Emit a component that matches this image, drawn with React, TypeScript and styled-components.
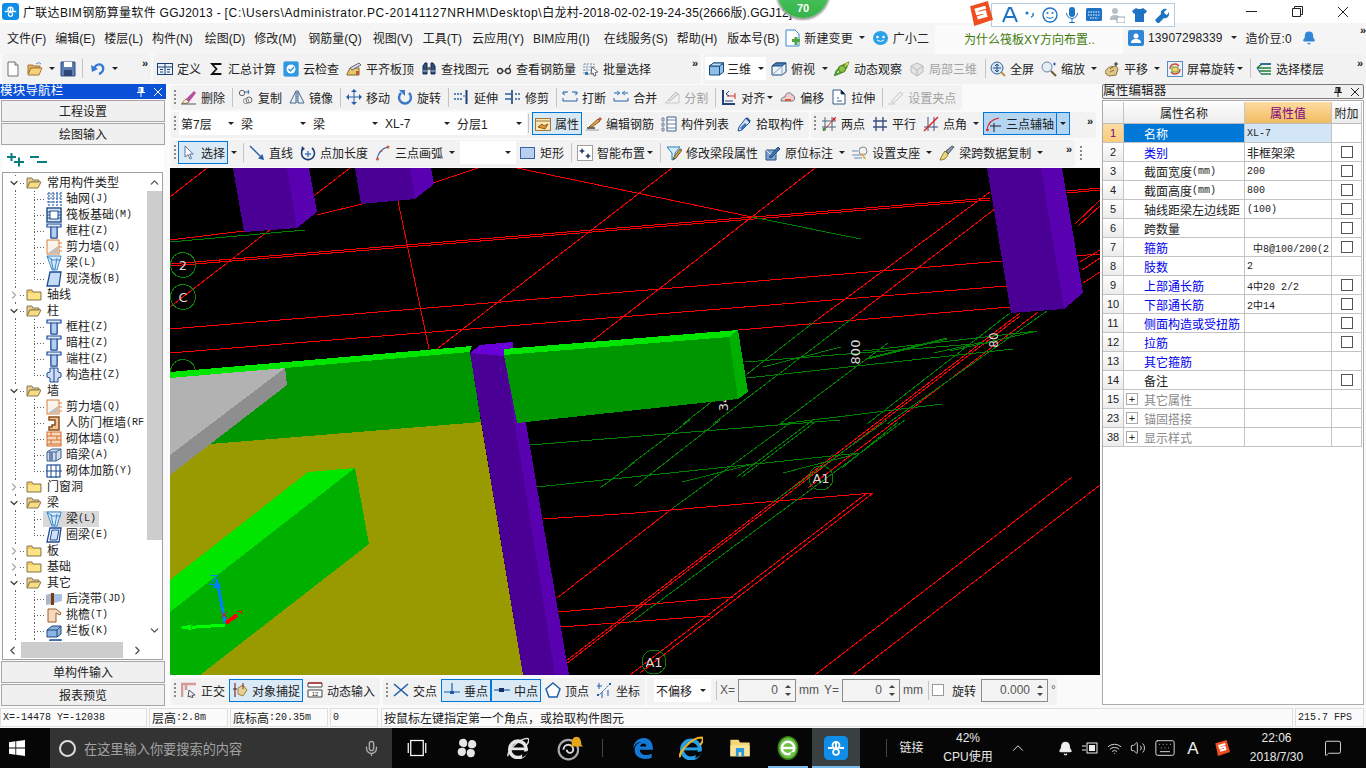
import React from 'react';
import styled, { createGlobalStyle } from 'styled-components';
import { Mic, Bell, Wifi, Volume2, Keyboard, ChevronUp, MessageSquare, ChevronRight, ChevronDown, ChevronLeft } from 'lucide-react';

const SANS = `"Liberation Sans","Noto Sans CJK SC",sans-serif`;
const MONO = `"Liberation Mono","Noto Sans CJK SC",monospace`;

const Global = createGlobalStyle`
  html, body { margin: 0; padding: 0; background: #fafafa; }
  body { font-family: ${SANS}; font-size: 12px; color: #222; }
  * { box-sizing: border-box; }
`;

const Page = styled.div`
  width: 1366px; height: 768px; overflow: hidden; position: relative;
  display: flex; flex-direction: column; background: #fafafa;
`;

/* ---------- title ---------- */
const TitleBar = styled.div`
  height: 23px; background: #fff; display: flex; align-items: center; padding-left: 2px; flex: none;
`;
const TitleText = styled.div`
  margin-left: 4px; font-size: 12px; color: #111; white-space: nowrap; letter-spacing: 0.14px;
`;
const TitleSpan = styled.span<{ $ls: number }>`letter-spacing: ${p => p.$ls}px;`;
const WinBtns = styled.div`margin-left: auto; display: flex;`;
const WinBtn = styled.div`width: 46px; height: 23px; display: flex; align-items: center; justify-content: center; color: #222;`;
const Badge = styled.div`
  position: absolute; left: 777px; top: -34px; width: 52px; height: 52px; border-radius: 50%;
  background: linear-gradient(#5fd06f, #35b34a); box-shadow: 0 1px 2px 1px #9a9a9a;
  display: flex; align-items: flex-end; justify-content: center; padding-bottom: 4px;
  color: #fff; font-weight: bold; font-size: 11px;
`;
const Sogou = styled.div`
  position: absolute; left: 991px; top: 3px; width: 184px; height: 24px; background: #fff;
  border: 1px solid #b5cde0; display: flex; align-items: center; padding-left: 10px; gap: 7px;
`;
const SogouLogo = styled.div`
  position: absolute; left: 968px; top: 1px; width: 25px; height: 25px;
`;

/* ---------- menu ---------- */
const MenuBar = styled.div`
  height: 31px; background: #f5f5f5; flex: none; display: flex; align-items: center; padding: 0 0 2px 7px; gap: 9px; white-space: nowrap;
`;
const MenuItem = styled.span<{ $ml?: number }>`margin-left: ${p => p.$ml ?? 0}px; display: inline-flex; align-items: center; gap: 3px;`;
const MenuText = styled.span<{ $ml?: number }>`margin-left: ${p => p.$ml ?? 1}px; letter-spacing: 0.1px;`;
const HintTab = styled.div`
  width: 188px; height: 29px; margin: 0 -4px -2px -3px; align-self: flex-end; background: #fbfbfb; border-radius: 4px 4px 0 0; padding-bottom: 2px;
  color: #3d7a0a; padding-left: 29px; display: flex; align-items: center;
`;
const CornerMore = styled.span`
  margin-left: auto; font-size: 11px; font-weight: bold; color: #222; line-height: 8px; align-self: flex-start; margin-top: 3px; margin-right: 0;
`;

/* ---------- toolbars ---------- */
const Row = styled.div<{ $h: number; $mt?: number }>`
  height: ${p => p.$h}px; margin-top: ${p => p.$mt ?? 0}px; display: flex; gap: 2px; flex: none;
`;
const Toolbar = styled.div<{ $w?: number; $ml?: number; $gap?: number; $pl?: number; $bg?: string; $pb?: number }>`
  ${p => (p.$w ? `width:${p.$w}px;` : '')}
  margin-left: ${p => p.$ml ?? 0}px;
  height: 100%; background: ${p => p.$bg ?? '#f2f2f2'}; border-radius: 3px; display: flex; align-items: center;
  gap: ${p => p.$gap ?? 7}px; padding: 0 3px ${p => p.$pb ?? 1}px ${p => p.$pl ?? 3}px; white-space: nowrap; flex: none;
`;
const Grip = styled.div`
  width: 2px; height: 15px; margin-right: -2px; flex: none;
  background: repeating-linear-gradient(to bottom, #8a8a8a 0 2px, transparent 2px 4px);
`;
const Tool = styled.div<{ $ml?: number; $off?: boolean }>`
  display: inline-flex; align-items: center; gap: 4px; flex: none;
  margin-left: ${p => p.$ml ?? 0}px;
  color: ${p => (p.$off ? '#a2a2a2' : '#222')};
`;
const ActiveTool = styled.div<{ $hi?: boolean; $ml?: number; $mr?: number }>`
  display: inline-flex; align-items: center; gap: 4px; flex: none; height: 23px;
  padding: 0 2px; margin: 0 ${p => p.$mr ?? -3}px 0 ${p => p.$ml ?? -3}px;
  border: 1px solid #0078d7; background: ${p => (p.$hi ? '#b4d6f2' : '#d9e9f6')}; color: #222;
`;
const SplitBtn = styled.div`
  width: 13px; height: 23px; margin-left: -7px; border: 1px solid #0078d7; border-left: none; background: #b4d6f2;
  display: flex; align-items: center; justify-content: center; flex: none;
`;
const Caret = styled.i<{ $ml?: number }>`
  display: inline-block; flex: none; width: 0; height: 0; margin-left: ${p => p.$ml ?? 0}px;
  border-left: 3px solid transparent; border-right: 3px solid transparent; border-top: 3px solid #222;
`;
const Sep = styled.div<{ $ml?: number; $mr?: number }>`
  width: 1px; height: 19px; background: #c4c4c4; flex: none; margin-left: ${p => p.$ml ?? 0}px; margin-right: ${p => p.$mr ?? -2}px;
`;
const More = styled.span`
  margin-left: auto; font-size: 11px; font-weight: bold; color: #222; line-height: 8px; align-self: flex-start; margin-top: 5px;
`;
const ComboGroup = styled.div`display: flex; gap: 0; flex: none; margin: 0 -7px 0 -2px;`;
const Combo = styled.div<{ $w?: number; $ml?: number }>`
  width: ${p => p.$w ?? 72}px; height: 23px; margin-left: ${p => p.$ml ?? 0}px; background: #fff; display: flex; align-items: center;
  justify-content: space-between; padding: 0 5px 0 2px; flex: none; font-size: 12px;
`;
const ViewCombo = styled(Combo)`
  gap: 2px; padding: 0 5px 0 3px; justify-content: flex-start;
`;
const Spin = styled.div<{ $w: number; $ml?: number }>`
  width: ${p => p.$w}px; height: 23px; margin-left: ${p => p.$ml ?? 0}px; border: 1px solid #8c8c8c; background: #f4f4f4; color: #555; display: flex;
  align-items: center; justify-content: flex-end; padding-right: 4px; gap: 7px; font-size: 12px; flex: none;
`;
const SpinArrows = styled.div`
  display: flex; flex-direction: column; gap: 5px;
  & > i { width: 0; height: 0; border-left: 3px solid transparent; border-right: 3px solid transparent; }
  & > i:first-child { border-bottom: 3px solid #444; }
  & > i:last-child { border-top: 3px solid #444; }
`;
const Plain = styled.span<{ $c?: string; $ml?: number }>`color: ${p => p.$c ?? '#555'}; margin-left: ${p => p.$ml ?? 0}px; flex: none;`;
const CheckBox = styled.span<{ $c?: string }>`
  display: inline-block; width: 12px; height: 12px; border: 1px solid ${p => p.$c ?? '#999'}; background: #fff; flex: none;
`;

/* ---------- layout ---------- */
const Work = styled.div`height: 621px; display: flex; flex: none;`;
const Left = styled.div`width: 166px; display: flex; flex-direction: column; flex: none;`;
const Center = styled.div`width: 930px; margin-left: 4px; padding-top: 1px; flex: none; display: flex; flex-direction: column;`;
const Right = styled.div`width: 262px; margin-left: 2px; flex: none; display: flex; flex-direction: column;`;

const NavHead = styled.div`
  height: 15px; background: #0b51d8; color: #fff; font-size: 12.5px; display: flex; align-items: center; justify-content: space-between; padding-right: 3px;
  letter-spacing: 0.2px; line-height: 15px;
`;
const HeadIcons = styled.div`display: flex; gap: 7px; align-items: center;`;
const NavBtn = styled.div`
  height: 22px; margin: 1px 1px 0 1px; padding-bottom: 2px; background: #f0f0f0; border: 1px solid #a6a6a6; display: flex; align-items: center; justify-content: center; flex: none;
`;
const TreeTools = styled.div`
  height: 26px; margin: 1px 2px 0 2px; background: #fff; display: flex; align-items: center; padding-left: 5px; gap: 6px; flex: none;
`;
const TreeBox = styled.div`
  height: 488px; margin: 0 3px 0 2px; border: 1px solid #a0a0a0; background: #fff; display: flex; flex-direction: column; flex: none;
`;
const TreeMain = styled.div`flex: 1; min-height: 0; display: flex;`;
const TreeList = styled.div`width: 144px; overflow: hidden; padding-top: 2px; flex: none;`;
const dotV = (x: number) => `repeating-linear-gradient(to bottom,#666 0 1px,transparent 1px 3px) ${x}px 0/1px 100% no-repeat`;
const TreeRow = styled.div<{ $child?: boolean; $half?: boolean }>`
  height: 16px; display: flex; align-items: center; white-space: nowrap; font-size: 12px; color: #222;
  padding-left: ${p => (p.$child ? 43 : 5)}px;
  background: ${p => [
    dotV(12),
    p.$child ? `repeating-linear-gradient(to right,#666 0 1px,transparent 1px 3px) 31px 8px/12px 1px no-repeat` : '',
    p.$child && !p.$half ? dotV(31) : '',
    p.$child && p.$half ? `repeating-linear-gradient(to bottom,#666 0 1px,transparent 1px 3px) 31px 0/1px 8px no-repeat` : '',
  ].filter(Boolean).join(',')};
`;
const TreeChevron = styled.span`
  width: 12px; display: inline-flex; align-items: center; justify-content: center; background: #fff; height: 12px; flex: none;
`;
const TreeItem = styled.span<{ $sel?: boolean }>`
  display: inline-flex; align-items: center; margin-left: -3px; padding: 0 3px; background: ${p => (p.$sel ? '#d9d9d9' : 'transparent')};
`;
const TreeLabel = styled.span<{ $ml?: number }>`
  margin-left: ${p => p.$ml ?? 4}px; line-height: 16px; display: inline-flex; align-items: center;
`;
const FolderGap = styled.span`width: 6px; flex: none; background: repeating-linear-gradient(to right,#666 0 1px,transparent 1px 3px) 0 8px/100% 1px no-repeat; height: 16px;`;
const Suffix = styled.span`font-family: ${MONO}; font-size: 10px; color: inherit;`;
const VScroll = styled.div`
  width: 15px; flex: none; background: #fff; display: flex; flex-direction: column; align-items: center;
`;
const ScrollThumb = styled.div<{ $h: number; $mt: number }>`width: 15px; height: ${p => p.$h}px; margin-top: ${p => p.$mt}px; background: #cdcdcd; flex: none;`;
const HScroll = styled.div`height: 18px; display: flex; align-items: center; flex: none; background: #fff; padding-left: 3px;`;
const HThumb = styled.div`width: 102px; height: 16px; background: #cdcdcd; margin: 0 8px 0 2px;`;

/* ---------- canvas ---------- */
const Canvas = styled.div`width: 930px; height: 507px; background: #000; margin-top: 1px; flex: none; overflow: hidden; line-height: 0;`;

/* ---------- property editor ---------- */
const PropHead = styled.div`
  height: 15px; border: 1px solid #7a7a7a; border-radius: 2px; background: #f0f0f0; display: flex; align-items: center; justify-content: space-between; padding-right: 3px;
  font-size: 12.5px; line-height: 13px; letter-spacing: 0.2px;
`;
const PropBody = styled.div`flex: 1; margin-top: 1px; background: #fff; border: 1px solid #ababab; padding: 1px 0 0 0; display: flex; flex-direction: column;`;
const PropGrid = styled.div`display: grid; grid-template-columns: 21px 121px 87px 30px; grid-template-rows: 22px; grid-auto-rows: 19px; width: 259px;`;
const HCell = styled.div<{ $hot?: boolean }>`
  height: 22px; display: flex; align-items: center; justify-content: center;
  background: ${p => (p.$hot ? 'linear-gradient(#fddca0,#f0bc62)' : 'linear-gradient(#fdfdfd,#ececec)')};
  color: ${p => (p.$hot ? '#800080' : '#222')}; border-right: 1px solid #c4c4c4; border-bottom: 1px solid #bcbcbc;
`;
const Num = styled.div<{ $hot?: boolean }>`
  background: ${p => (p.$hot ? 'linear-gradient(#fcdc9f,#f8cc7d)' : 'linear-gradient(#fff,#ececec)')};
  color: ${p => (p.$hot ? '#800080' : '#222')}; border-right: 1px solid #c4c4c4; border-bottom: 1px solid #c4c4c4;
  display: flex; align-items: center; justify-content: center; font-size: 11px;
`;
const Name = styled.div<{ $c?: string; $sel?: boolean }>`
  background: ${p => (p.$sel ? '#0078d7' : '#fff')}; color: ${p => (p.$sel ? '#fff' : p.$c ?? '#222')};
  border-right: 1px solid #c4c4c4; border-bottom: 1px solid #c4c4c4; padding-left: 20px; display: flex; align-items: center; white-space: nowrap; overflow: hidden;
  position: relative;
`;
const Expander = styled.span`
  position: absolute; left: 2px; top: 3px; width: 12px; height: 12px; border: 1px solid #aaa; color: #222; display: flex; align-items: center; justify-content: center; font-size: 11px; line-height: 10px;
`;
const Val = styled.div<{ $mono?: boolean; $sel?: boolean }>`
  background: ${p => (p.$sel ? '#d3e6f7' : '#fff')}; border-right: 1px solid #c4c4c4; border-bottom: 1px solid #c4c4c4; padding-left: 2px;
  display: flex; align-items: center; white-space: pre; overflow: hidden;
  font-family: ${p => (p.$mono ? MONO : SANS)}; font-size: ${p => (p.$mono ? 10 : 12)}px;
`;
const Add = styled.div`
  border-right: 1px solid #c4c4c4; border-bottom: 1px solid #c4c4c4; display: flex; align-items: center; justify-content: center; background: #fff;
`;

/* ---------- status ---------- */
const Status = styled.div`height: 20px; margin-top: 3px; display: flex; gap: 2px; flex: none; background: #fafafa;`;
const StatusCell = styled.div<{ $w: number; $ml?: number }>`
  width: ${p => p.$w}px; margin-left: ${p => p.$ml ?? 0}px; height: 19px; background: #fbfbfb; border: 1px solid #dedede; display: flex; align-items: center; padding-left: 2px;
  font-family: ${MONO}; font-size: 10px; color: #222; white-space: nowrap; flex: none;
`;
const Cjk = styled.span`font-family: ${SANS}; font-size: 12px;`;

/* ---------- taskbar ---------- */
const Taskbar = styled.div`flex: 1; background: #060606; display: flex; align-items: stretch; color: #fff;`;
const StartCell = styled.div`width: 50px; display: flex; align-items: center; justify-content: center; padding-right: 16px; flex: none;`;
const Search = styled.div`
  width: 342px; background: #333; display: flex; align-items: center; padding-left: 9px; gap: 8px; color: #a4a4a4; font-size: 13.2px; flex: none;
`;
const MicWrap = styled.span`margin-left: auto; margin-right: 12px; display: flex; color: #aaa;`;
const Cortana = styled.span`width: 17px; height: 17px; border: 2px solid #ddd; border-radius: 50%; flex: none;`;
const TaskCell = styled.div<{ $w?: number; $on?: boolean; $line?: boolean }>`
  width: ${p => p.$w ?? 49}px; display: flex; align-items: center; justify-content: center; flex: none;
  background: ${p => (p.$on ? '#3a3f42' : 'transparent')};
  box-shadow: ${p => (p.$on ? 'inset 0 -2px 0 #76b9ed' : p.$line ? 'inset 4px 0 0 #060606, inset -4px 0 0 #060606, inset 0 -2px 0 #76b9ed' : 'none')};
`;
const TaskSep = styled.div<{ $ml: number; $mr?: number }>`
  width: 1px; height: 18px; align-self: center; background: #444; margin-left: ${p => p.$ml}px; margin-right: ${p => p.$mr ?? 0}px; flex: none;
`;
const TrayCell = styled.div<{ $w: number; $ml?: number }>`
  width: ${p => p.$w}px; margin-left: ${p => p.$ml ?? 0}px; display: flex; flex-direction: column; align-items: center; justify-content: center;
  font-size: 12px; line-height: 19px; color: #e8e8e8; flex: none; white-space: nowrap;
`;
const BigA = styled.span`font-size: 17px; color: #eee;`;

/* ---------- icons ---------- */
const Svg = styled.svg`flex: none; display: block;`;
const blue = '#2a5fa8', dk = '#1c3f73';
const ICONS: Record<string, React.ReactNode> = {
  new: <><path d="M3 1h7l3 3v11H3z" fill="#fff" stroke="#6f6f6f" /><path d="M10 1v3h3" fill="#ddd" stroke="#6f6f6f" /></>,
  open: <><path d="M1 13V4h5l1 1h6v2H4z" fill="#e3b35b" stroke="#a5793a" /><path d="M1 14l3-7h11l-3 7z" fill="#f5d27a" stroke="#a5793a" /><path d="M9 3q3-3 5 0" fill="none" stroke="#5a88bb" /></>,
  save: <><path d="M1 1h14v14H1z" fill="#5c7cb4" stroke="#334f80" /><path d="M4 1h8v5H4z" fill="#fff" /><path d="M4 9h8v6H4z" fill="#2d4777" /></>,
  undo: <><path d="M5 9C3 4 11 1 13 6c1 3-1 6-4 7" fill="none" stroke="#3478cf" strokeWidth="2.4" /><path d="M1 4l1 7 6-3z" fill="#3478cf" /></>,
  define: <><rect x="0.5" y="2.5" width="15" height="11" fill="#e9f1f9" stroke={dk} /><path d="M1 6h14M8 3v10M3 8.5h3M3 11h3M10 8.5h3M10 11h3" stroke={dk} /></>,
  sigma: <path d="M12.5 4V3H4l4.5 5L4 13h8.5v-1" fill="none" stroke="#111" strokeWidth="1.8" />,
  cloud: <><rect x="0.5" y="0.5" width="15" height="15" rx="2" fill="#2d97e0" stroke="#77b9e9" /><circle cx="8" cy="8" r="4.5" fill="#fff" /><path d="M5.5 8l2 2 3.5-4" fill="none" stroke="#2d97e0" strokeWidth="1.5" /></>,
  flat: <><path d="M1 13l3-6h9v7H1z" fill="#e9c66b" stroke="#7d6a2e" /><path d="M4 7l9-5 2 2-9 5z" fill="#d8dde4" stroke="#667" /><path d="M10 10h3v4h-3z" fill="#c05a2c" /></>,
  binoc: <><path d="M2 13V5l2-3h2v11zM14 13V5l-2-3h-2v11z" fill="#2f4d7a" stroke="#152a4e" /><path d="M6 6h4v3H6z" fill="#666" /><path d="M2 10h4M10 10h4" stroke="#b8c8e0" /></>,
  glasses: <><circle cx="4" cy="10" r="2.5" fill="none" stroke="#333" strokeWidth="1.3" /><circle cx="12" cy="10" r="2.5" fill="none" stroke="#333" strokeWidth="1.3" /><path d="M6.5 10h3M13 7l1-3h1" fill="none" stroke="#333" /></>,
  batch: <><path d="M1 3h10v10H1z" fill="#fff" stroke="#7d8ca3" strokeDasharray="2 1" /><path d="M1 6h10M1 9h10M4 3v10M8 3v10" stroke="#9fb0c6" /><path d="M2 11h3v3H2z" fill="#3a6fb3" /><path d="M9 6l6 5-3 .5 1 3-2 .5-1-3-2 1z" fill="#fff" stroke="#666" /></>,
  cube: <><path d="M1 5l4-3h10v9l-4 3H1z" fill="#8fc0e8" stroke="#174a7c" /><path d="M1 5h10v9M11 5l4-3" fill="none" stroke="#174a7c" /><path d="M1 5l4-3h10l-4 3z" fill="#c4e0f5" stroke="#174a7c" /></>,
  top: <><path d="M1 5l4-3h10v9l-4 3H1z" fill="#eef3f8" stroke="#174a7c" /><path d="M1 5l4-3h10l-4 3z" fill="#4a7fb5" stroke="#174a7c" /><path d="M11 5v9M1 14l10-9" fill="none" stroke="#7da2c4" /></>,
  orbit: <><path d="M1 14q2-8 13-12-2 9-13 12z" fill="none" stroke="#4f9a34" strokeWidth="2" /><circle cx="8" cy="8" r="3.5" fill="#8cc43d" stroke="#467a1b" /><circle cx="13" cy="3" r="1.6" fill="#f0c840" /></>,
  local: <><path d="M2 5l6-3 6 3v6l-6 4-6-4z" fill="#e4e4e4" stroke="#b8b8b8" /><path d="M2 5l6 4 6-4M8 9v6" fill="none" stroke="#b8b8b8" /></>,
  full: <><circle cx="7" cy="7" r="6" fill="#d4e5f5" stroke="#37618f" /><path d="M7 3v8M3 7h8" stroke="#23507e" /><path d="M5 5l2-2 2 2M5 9l2 2 2-2" fill="none" stroke="#23507e" /><path d="M11 11l4 4" stroke="#c2923f" strokeWidth="2" /></>,
  zoom: <><circle cx="6" cy="6" r="5" fill="#e4ecf4" stroke="#6d87a3" /><path d="M10 10l5 5" stroke="#6a5a30" strokeWidth="2" /><path d="M12 3h3M13.5 1.5v3" stroke="#2a5fa8" /></>,
  pan: <><path d="M2 13c-2-4 2-6 4-7l6-1 2 3-2 6-7 1z" fill="#dfc586" stroke="#8a7440" /><path d="M12 1v4M10 3h4" stroke="#222" /><path d="M6 8l3-2M6 11l4-2" stroke="#8a7440" /></>,
  rot: <><rect x="0.5" y="0.5" width="15" height="15" fill="#eaf3fb" stroke="#5a8dbd" /><path d="M3 8a5 5 0 0 1 9-3M13 8a5 5 0 0 1-9 3" fill="none" stroke="#cf4b36" strokeWidth="1.4" /><path d="M5 6h6v5H5z" fill="#f3d668" stroke="#6f9a3a" /></>,
  floors: <><path d="M1 7l5-4h9M1 7h14M3 10h12M5 13h10" fill="none" stroke="#1f7f3d" strokeWidth="1.5" /><path d="M4 3h11" stroke="#2a5fa8" strokeWidth="1.5" /><path d="M1 7l4 6" stroke="#2a5fa8" /></>,
  del: <><path d="M1 14c2-2 2-3 4-4l3 3c-2 1-4 2-7 1z" fill="#f4f1d6" stroke="#8b7b40" /><path d="M5 10l3 3 7-9-2-2z" fill="#b6529d" /><path d="M0 15h15" stroke="#555" /></>,
  copy: <><circle cx="4" cy="4" r="2.7" fill="none" stroke="#666" /><circle cx="11" cy="11" r="3" fill="none" stroke="#666" /><circle cx="8" cy="12" r="2.7" fill="none" stroke="#999" /><path d="M6 3h5l-1-2M11 3l-1 2" fill="none" stroke="#3469a6" /></>,
  mirror: <><path d="M7 2L1 14h6zM9 2l6 12H9z" fill="#eef2f7" stroke="#44668f" /><path d="M8 1v14" stroke="#44668f" strokeDasharray="1 1" /></>,
  move: <><path d="M8 1v14M1 8h14" stroke="#2a5fa8" /><path d="M8 0l3 3H5zM8 16l3-3H5zM0 8l3-3v6zM16 8l-3-3v6z" fill="#2a5fa8" /></>,
  rotate: <><path d="M4 4a6 6 0 1 0 8 0" fill="none" stroke="#3b79c4" strokeWidth="2.4" /><path d="M2 1h6v6z" fill="#3b79c4" /></>,
  extend: <><path d="M0 5h9M0 10h9" stroke={blue} strokeDasharray="2 1" strokeWidth="1.4" /><path d="M12.5 1v14" stroke={dk} strokeWidth="2" /><path d="M9 7h2" stroke={blue} /></>,
  trim: <><path d="M0 5h6M0 10h6" stroke={blue} strokeWidth="1.3" /><path d="M10 5h6M10 10h6" stroke={blue} strokeWidth="1.3" strokeDasharray="2 1" /><path d="M7 1v14" stroke={dk} strokeWidth="1.6" /></>,
  brk: <><path d="M1 5V3h5M15 5V3h-5" fill="none" stroke={blue} /><path d="M1 12h14M1 9v3M15 9v3" fill="none" stroke={blue} /><path d="M3 6l-2-1 3-2M13 6l2-1-3-2" fill="none" stroke="#3a88d0" /></>,
  merge: <><path d="M1 4h5M10 4h5M1 12h14M1 9v3M15 9v3" fill="none" stroke={blue} /><path d="M4 2l3 2-3 2M12 2L9 4l3 2" fill="none" stroke="#3a88d0" /></>,
  split: <><path d="M1 14L15 5M1 14h14V5" fill="none" stroke="#c8c8c8" /><path d="M4 11l8-8 2 2-8 7z" fill="#e6e6e6" stroke="#bbb" /></>,
  align: <><path d="M2 1v14h12" fill="none" stroke="#22427a" strokeWidth="2" /><path d="M6 7h8M14 4v6" stroke="#c9322f" /><path d="M4 12h8" stroke="#22427a" /><path d="M5 5l3-3M5 5l3 2" fill="none" stroke="#22427a" /></>,
  offset: <><path d="M1 12c0-3 2-4 4-4 0-4 6-6 7-2 3 0 4 6 0 6z" fill="#f4cfc7" stroke="#6c7b8c" /><path d="M5 11h6" stroke="#d35c44" strokeWidth="2" /></>,
  stretch: <><path d="M2 1h8l4 4v10H2z" fill="#fff" stroke="#345a84" /><path d="M10 1v4h4M6 9h2M6 12h5" stroke="#345a84" /></>,
  grip: <><path d="M0 15h7" stroke="#c8c8c8" /><path d="M3 13l9-10 3 2-9 9z" fill="#ededed" stroke="#c8c8c8" /></>,
  prop: <><rect x="0.5" y="2.5" width="15" height="12" fill="#fde7b4" stroke="#a1773a" /><path d="M1 5h14" stroke="#a1773a" /><path d="M3 11l4-3 2 2 4-2-3 5z" fill="#e8963a" stroke="#8a5b1e" /></>,
  edit: <><path d="M1 12h8" stroke="#333" strokeWidth="1.4" /><path d="M3 11l9-8 2 2-8 6z" fill="#e8a93f" stroke="#7a5a20" /><path d="M12 3l2-2 2 2-2 2z" fill="#c05844" /><path d="M0 14h13" stroke="#999" /></>,
  list: <><path d="M6 1h9v14H6z" fill="#fff" stroke="#3a5f8f" /><path d="M6 4h9M6 8h9M6 12h9M1 2h2v3H1zM1 7h2v3H1zM1 12h2v3H1z" fill="none" stroke="#6c7f96" /></>,
  pick: <><path d="M10 2l4 4-8 8-4 1 1-4z" fill="#d5e6f7" stroke="#21508a" /><path d="M4 12l5-5 2 2-5 5z" fill="#3a74bb" /><path d="M11 1l4 4-2 1-3-3z" fill="#21508a" /></>,
  two: <><path d="M4 1v14M11 1v14M1 5h14M1 11h14" stroke="#49667f" /><path d="M2 15L15 1" stroke="#d22" /><circle cx="3" cy="13" r="1.5" fill="#2d9a4a" /><circle cx="13" cy="3" r="1.5" fill="#d22" /></>,
  para: <path d="M4 1v14M11 1v14M1 5h14M1 11h14" stroke="#3c4f80" strokeWidth="1.4" />,
  angle: <><path d="M5 1v14M11 1v14M1 11h14" stroke="#3c4f80" /><path d="M1 15L15 1" stroke="#d22" strokeWidth="1.4" /></>,
  arcaxis: <><path d="M1 14Q2 4 13 2" fill="none" stroke="#d22" strokeWidth="1.2" /><path d="M8 7v9M4 10h11" stroke="#223" /><circle cx="1.5" cy="14" r="1.3" fill="#d22" /></>,
  select: <path d="M4 1v11l3-2.4 2 4.4 1.6-.7-2-4.3h3.6z" fill="#fff" stroke="#5d7594" />,
  line: <><path d="M1 1l13 13" stroke="#2a5fa8" strokeWidth="1.4" /><path d="M15 15l-6-1.5 4.5-4.5z" fill="#2a5fa8" /></>,
  ptlen: <><path d="M3 4a6.5 6.5 0 1 0 9-1" fill="none" stroke={dk} strokeWidth="1.6" /><path d="M2 1l3 3-4 2z" fill={dk} /><path d="M8 6v6M5 9h6" stroke="#3a78c5" strokeWidth="1.4" /></>,
  arc: <><path d="M2 14Q4 4 13 2" fill="none" stroke="#2a5fa8" strokeWidth="1.2" /><circle cx="2.5" cy="14" r="1.5" fill="#d25a3c" /><circle cx="13" cy="2" r="1.5" fill="#d25a3c" /><circle cx="6.5" cy="6" r="1" fill="#d25a3c" /></>,
  rect: <rect x="0.5" y="2.5" width="14" height="11" fill="#b8cff0" stroke="#3a62a8" />,
  smart: <><rect x="0.5" y="0.5" width="15" height="15" fill="#fff" stroke="#444" strokeDasharray="1 1" /><path d="M5 3l1 2 2 1-2 1-1 2-1-2-2-1 2-1zM11 8l1 2 2 1-2 1-1 2-1-2-2-1 2-1z" fill="#2a3f6e" /></>,
  seg: <><path d="M1 2h13l-5 6v6l-3 1V8z" fill="#d7ecf9" stroke="#1d80bd" /><path d="M8 12l6-8 2 1-6 8-3 1z" fill="#d5a84f" stroke="#6e5220" /></>,
  inplace: <><path d="M1 5h10v10H1z" fill="#7da3d0" stroke="#2d517f" /><path d="M1 5l4 4h6" stroke="#dbe7f5" fill="none" /><path d="M4 12l9-10 2 2-9 9z" fill="#3f74b3" stroke="#204a7f" /></>,
  support: <><circle cx="11" cy="6" r="4" fill="#f1f1f1" stroke="#8a8a8a" /><path d="M0 6h6M0 10h10M2 13h8" stroke="#6d8db0" /><path d="M9 9l3 5h2l-3-6z" fill="#e0b258" /></>,
  brush: <><path d="M1 15c4 0 7-2 8-6L6 6C4 9 2 12 1 15z" fill="#f0d776" stroke="#8c7a2a" /><path d="M7 6l2 3 6-7-2-1z" fill="#8a9ab2" stroke="#4b5566" /></>,
  ortho: <><path d="M1 15V2h14" fill="none" stroke="#d39b9b" strokeWidth="2.6" /><path d="M5 2v6" stroke="#d39b9b" strokeWidth="2.6" /><path d="M8 8l6 5-3 .5 1 2-1.5.5-1-2L7 15z" fill="#eee" stroke="#556" /></>,
  snap: <><path d="M3 1v14" stroke="#7c2d2d" strokeWidth="1.2" /><path d="M1 7h4" stroke="#444" strokeWidth="1.2" /><path d="M6 6l5-3 4 5-4 6-5-2z" fill="#e7cf92" stroke="#9a8246" /><path d="M11 1v6" stroke="#7c2d2d" /></>,
  dyn: <><path d="M1 1h14v4H1z" fill="#fff" stroke="#444" /><path d="M1 8h14v7H1z" fill="#fff" stroke="#444" /><text x="8" y="14" textAnchor="middle" fontSize="6" fontFamily="Liberation Sans" fill="#222">12</text><path d="M1 1h14" stroke="#b3322f" strokeWidth="1.5" /></>,
  cross: <path d="M1 2l14 12M15 2L1 14" stroke="#1f5fa8" strokeWidth="1.6" />,
  perp: <><path d="M8 1v9M0 10h16" stroke="#1f5fa8" strokeWidth="1.2" /><rect x="6" y="9" width="4" height="3" fill="#1f5fa8" /></>,
  mid: <><path d="M0 8h16" stroke="#1f5fa8" strokeWidth="1.2" /><rect x="5" y="6" width="5" height="4" fill="#152f68" /></>,
  vertex: <path d="M8 1l7 6-3 8H4L1 7z" fill="#fff" stroke="#1f5fa8" strokeWidth="1.5" />,
  coord: <><path d="M2 14L14 2" stroke="#1f5fa8" strokeDasharray="2 1" /><path d="M3 1v6M1 4h5M6 10v6M12 8v6" stroke="#1f5fa8" /><rect x="1" y="12" width="2" height="2" fill="#1f5fa8" /><rect x="13" y="1" width="2" height="2" fill="#1f5fa8" /></>,
  folderO: <><path d="M1 13V3h5l1 2h6v2H4z" fill="#e9c986" stroke="#8b7a55" /><path d="M1 13l3-6h11l-3 6z" fill="#f8dc82" stroke="#8b7a55" /></>,
  folderC: <><path d="M1 13V3h5l1 2h8v8z" fill="#f5cd5c" stroke="#8b7a55" /><path d="M2 6h12v6H2z" fill="#fbe487" /></>,
  grid: <><path d="M1 2h14v12H1z" fill="#fff" stroke="none" /><path d="M3 1v14M7 1v14M11 1v14M15 1v14M1 3h14M1 7h14M1 11h14" stroke="#2f62ab" strokeWidth="1.2" strokeDasharray="2 1" /></>,
  raft: <><rect x="1" y="1" width="14" height="14" fill="#d9e6f5" stroke="#1d4b8d" strokeWidth="1.4" /><rect x="4" y="4" width="8" height="8" fill="#fff" stroke="#1d4b8d" /><path d="M1 5h3M1 8h3M1 11h3M12 5h3M12 8h3M12 11h3" stroke="#1d4b8d" /></>,
  col: <><path d="M1 1h14v3H11v11H5V4H1z" fill="#dbe8f7" stroke="#1c4a97" strokeWidth="1.2" /><path d="M5 4h6v11H5z" fill="#b6ceee" stroke="#1c4a97" /></>,
  wall: <><rect x="1" y="1" width="12" height="14" fill="#fbf4ed" stroke="#d9803d" /><path d="M2 14l10-7v7z" fill="#a9a9a9" opacity=".7" /><path d="M13 4h3M13 8h3M13 12h3" stroke="#d9803d" /></>,
  beam: <><path d="M1 1h14L11 15H6z" fill="#dcebf9" stroke="#3d86c9" /><path d="M5 3l2 11h2l2-11M1 1l5 4h9" fill="none" stroke="#3d86c9" /></>,
  slab: <path d="M4 1h11l-2 14H1z" fill="#c6dbf4" stroke="#1c4a97" strokeWidth="1.3" />,
  cc: <><path d="M4 1h8v4l3 1v4l-3 1v4H4v-4L1 10V6l3-1z" fill="#cddcf0" stroke="#1c4a97" /><path d="M8 1v14" stroke="#1c4a97" /></>,
  door: <path d="M3 2h10v13H3v-3h3v-2h3V5H3z" fill="#f0c49a" stroke="#8a4d1d" strokeWidth="1.5" />,
  brick: <><rect x="1" y="1" width="14" height="14" fill="#f5d9bf" stroke="#d56a2a" /><path d="M1 5h14M1 9h14M1 13h14M5 1v4M11 5v4M5 9v4" stroke="#d56a2a" /></>,
  hidden: <><path d="M1 5l5-3h9v9l-5 3H1z" fill="#cfdcef" stroke="#3a5e8c" /><path d="M1 5h9v9M10 5l5-3" fill="none" stroke="#3a5e8c" /><path d="M3 5h4v9H3z" fill="#6d89ac" /></>,
  rebar: <><rect x="1" y="2" width="13" height="12" fill="#fff" stroke="#1c4a97" strokeWidth="1.2" /><path d="M0 8h16M5 2v13M10 2v13" stroke="#1c4a97" /></>,
  ring: <><path d="M4 1h11l-2 14H1z" fill="#fff" stroke="#1c4a97" strokeWidth="1.3" /><path d="M6 3h7l-2 10H4z" fill="#cfe0f5" stroke="#1c4a97" /></>,
  post: <><path d="M0 4l7-2v11l-7 1z" fill="#aab7c6" /><path d="M5 2h3v12H5z" fill="#7a3b10" /><path d="M8 3h8v7l-8 2z" fill="#a7c2e3" /></>,
  eave: <path d="M2 2h8l5 4-1 2-4-2v9H2z" fill="#f5d9bf" stroke="#9a5a2a" />,
  rail: <><path d="M1 7l5-4h9v8l-4 3H1z" fill="#8bb4e1" stroke="#22477d" /><path d="M1 7h10v7M11 7l4-4" fill="none" stroke="#22477d" /></>,
  winT: <path d="M0 2.2l6.4-.9v6.3H0zM7.2 1.2L16 0v7.6H7.2zM0 8.4h6.4v6.3L0 13.8zM7.2 8.4H16V16l-8.8-1.2z" fill="#fff" />,
  task: <><rect x="3" y="2" width="10" height="12" fill="none" stroke="#fff" /><path d="M1 4v8M15 4v8" stroke="#fff" /></>,
  fan: <path d="M7 7C3 8 1 5 3 2c3-2 6 0 5 4zM9 7C8 3 11 1 14 3c2 3 0 6-4 5zM9 9c4-1 6 2 4 5-3 2-6 0-5-4zM7 9c1 4-2 6-5 4-2-3 0-6 4-5z" fill="#e6e6e6" />,
  ie: <><circle cx="8" cy="9" r="6" fill="none" stroke="#e6e6e6" strokeWidth="2.6" /><path d="M2 8.6h12" stroke="#e6e6e6" strokeWidth="2" /><path d="M11 11l5-1-2 3-3 2z" fill="#060606" /><path d="M1 14C-1 12 8 1 15 1c2 1 0 4-1 5" fill="none" stroke="#e6e6e6" /></>,
  swirl: <><circle cx="7" cy="9" r="6" fill="none" stroke="#aaa" strokeWidth="1.3" /><path d="M4 9a3 3 0 0 1 6 0 2 2 0 0 1-4 0" fill="none" stroke="#ddd" strokeWidth="1.2" /><path d="M9 6c0-3 1-5 3-5s3 2 3 5l1 1H8z" fill="#e8a517" /></>,
  edge: <path d="M1 8C1 3 5 0 9 0c5 0 7 4 7 9H6c0 4 5 5 9 3v3c-5 2-13 1-13-6 0-3 2-5 5-6-3 0-5 2-6 5zM6 6.5h5c0-3-4-3-5 0z" fill="#1479d6" />,
  ieC: <><circle cx="8" cy="9" r="6" fill="none" stroke="#23a0e6" strokeWidth="2.6" /><path d="M2 8.6h12" stroke="#23a0e6" strokeWidth="2" /><path d="M1 14C-1 12 8 1 15 1c2 1 0 4-1 5" fill="none" stroke="#f0b428" strokeWidth="1.4" /><path d="M11 11l5-1-2 3-3 2z" fill="#060606" /></>,
  folderT: <><path d="M1 2h6l1 2h7v10H1z" fill="#f5d676" /><path d="M1 6h14v8H1z" fill="#fbe399" /><path d="M5 8h6v6H5z" fill="#2a9ae0" /><path d="M7 11h2v3H7z" fill="#fbe399" /></>,
  geh: <><ellipse cx="8" cy="8" rx="6.5" ry="7.5" fill="#6ec044" stroke="#2f7a12" /><circle cx="8" cy="8" r="4.2" fill="none" stroke="#fff" strokeWidth="1.6" /><path d="M3.500 8h9" stroke="#fff" strokeWidth="1.6" /><path d="M10 11l3-.5-1 2-3 1.500z" fill="#6ec044" /></>,
};
const Ico: React.FC<{ n: string; w?: number; h?: number }> = ({ n, w = 16, h = 16 }) => (
  <Svg width={w} height={h} viewBox="0 0 16 16">{ICONS[n]}</Svg>
);
const PinIco = () => (
  <Svg width={10} height={12} viewBox="0 0 10 12"><path d="M2.500 1h5v5h1.500v1H5.500v4h-1V7H1V6h1.500z M3.500 2v4h1V2z" fill="currentColor" fillRule="evenodd" /></Svg>
);
const CloseIco = () => (
  <Svg width={10} height={10} viewBox="0 0 10 10"><path d="M1 1l8 8M9 1L1 9" stroke="currentColor" /></Svg>
);
const AppLogo: React.FC<{ s: number }> = ({ s }) => (
  <Svg width={s} height={s} viewBox="0 0 18 18">
    <rect width="18" height="18" rx="3.5" fill="#0f8ee9" />
    <path d="M3 9h3.500M11.500 9H15M9 4v10" stroke="#fff" strokeWidth="1.6" fill="none" />
    <circle cx="9" cy="7" r="2.6" fill="none" stroke="#fff" strokeWidth="1.4" />
    <circle cx="9" cy="12" r="2.2" fill="#0f8ee9" stroke="#fff" strokeWidth="1.3" />
  </Svg>
);
const SLogo: React.FC<{ s: number }> = ({ s }) => (
  <Svg width={s} height={s} viewBox="0 0 24 24">
    <path d="M2 5l17-5 5 18-18 6z" fill="#ee4d1f" />
    <path d="M17 6L8 8.500l1 3.500 7 -1.500 1 3.500-8 2.200" fill="none" stroke="#fff" strokeWidth="3" />
  </Svg>
);
const Tt: React.FC<{ n: string; t: string; off?: boolean; ml?: number; caret?: number }> = ({ n, t, off, ml, caret }) => (
  <Tool $ml={ml} $off={off}><Ico n={n} /><span>{t}</span>{caret !== undefined && <Caret $ml={caret} />}</Tool>
);
const At: React.FC<{ n: string; t: string; hi?: boolean; ml?: number; mr?: number }> = ({ n, t, hi, ml, mr }) => (
  <ActiveTool $hi={hi} $ml={ml} $mr={mr}><Ico n={n} /><span>{t}</span></ActiveTool>
);

/* ---------- menu data ---------- */
const MENU: [string, number][] = [
  ['文件(F)', 0], ['编辑(E)', 0], ['楼层(L)', 0], ['构件(N)', 0], ['绘图(D)', 3], ['修改(M)', 0], ['钢筋量(Q)', 3], ['视图(V)', 2],
  ['工具(T)', 1], ['云应用(Y)', 1], ['BIM应用(I)', 0], ['在线服务(S)', 5], ['帮助(H)', 0], ['版本号(B)', 1],
];

/* ---------- tree data ---------- */
type Node = { f?: 'o' | 'c'; t: string; s?: string; i?: string; sel?: boolean; last?: boolean };
const TREE: Node[] = [
  { f: 'o', t: '常用构件类型' },
  { i: 'grid', t: '轴网', s: '(J)' }, { i: 'raft', t: '筏板基础', s: '(M)' }, { i: 'col', t: '框柱', s: '(Z)' },
  { i: 'wall', t: '剪力墙', s: '(Q)' }, { i: 'beam', t: '梁', s: '(L)' }, { i: 'slab', t: '现浇板', s: '(B)', last: true },
  { f: 'c', t: '轴线' },
  { f: 'o', t: '柱' },
  { i: 'col', t: '框柱', s: '(Z)' }, { i: 'col', t: '暗柱', s: '(Z)' }, { i: 'col', t: '端柱', s: '(Z)' }, { i: 'cc', t: '构造柱', s: '(Z)', last: true },
  { f: 'o', t: '墙' },
  { i: 'wall', t: '剪力墙', s: '(Q)' }, { i: 'door', t: '人防门框墙', s: '(RF' }, { i: 'brick', t: '砌体墙', s: '(Q)' },
  { i: 'hidden', t: '暗梁', s: '(A)' }, { i: 'rebar', t: '砌体加筋', s: '(Y)', last: true },
  { f: 'c', t: '门窗洞' },
  { f: 'o', t: '梁' },
  { i: 'beam', t: '梁', s: '(L)', sel: true }, { i: 'ring', t: '圈梁', s: '(E)', last: true },
  { f: 'c', t: '板' }, { f: 'c', t: '基础' },
  { f: 'o', t: '其它' },
  { i: 'post', t: '后浇带', s: '(JD)' }, { i: 'eave', t: '挑檐', s: '(T)' }, { i: 'rail', t: '栏板', s: '(K)' }, { i: 'slab', t: '压顶', s: '(YD)' },
];

/* ---------- prop data ---------- */
const B = '#0000ee', G = '#8a8a8a';
type P = { n: number; t: string; s?: string; c?: string; v?: string; mono?: boolean; chk?: boolean; exp?: boolean };
const PROPS: P[] = [
  { n: 2, t: '类别', c: B, v: '非框架梁', chk: true },
  { n: 3, t: '截面宽度', s: '(mm)', v: '200', mono: true, chk: true },
  { n: 4, t: '截面高度', s: '(mm)', v: '800', mono: true, chk: true },
  { n: 5, t: '轴线距梁左边线距', v: '(100)', mono: true, chk: true },
  { n: 6, t: '跨数量', chk: true },
  { n: 7, t: '箍筋', c: B, v: ' 中8@100/200(2', mono: true, chk: true },
  { n: 8, t: '肢数', c: B, v: '2', mono: true },
  { n: 9, t: '上部通长筋', c: B, v: '4中20 2/2', mono: true, chk: true },
  { n: 10, t: '下部通长筋', c: B, v: '2中14', mono: true, chk: true },
  { n: 11, t: '侧面构造或受扭筋', c: B, chk: true },
  { n: 12, t: '拉筋', c: B, chk: true },
  { n: 13, t: '其它箍筋', c: B },
  { n: 14, t: '备注', chk: true },
  { n: 15, t: '其它属性', c: G, exp: true },
  { n: 23, t: '锚固搭接', c: G, exp: true },
  { n: 38, t: '显示样式', c: G, exp: true },
];

/* ---------- canvas lines ---------- */
const RED: number[][] = [
  [170,197,207,168],[170,307,350,168],[170,240,244,231],[317,215,362,204],[433,183,478,168],
  [170,264,990,198],[170,266,990,200],[1067,191,1100,188],[1067,193,1100,190],
  [398,201,429,349],[170,329,1003,261],[1075,256,1100,254],[170,353,1007,286],[738,330,1010,307],
  [437,349,672,168],[592,341,815,168],[517,168,752,217],
  [814,322,990,192],[850,320,1000,205],
  [1075,224,1100,200],[1078,226,1100,206],[1080,262,1100,250],[1082,270,1100,258],[1083,283,1100,272],
  [566,661,1020,313],[566,664,1020,316],[557,598,673,508],[808,488,1038,312],
  [543,519,635,513],[635,513,873,493],[873,493,640,673],[867,493,630,675],
  [558,612,733,597],[561,627,710,616],[815,675,1072,477],[853,675,1100,485],
];
const GREEN: number[][] = [
  [170,242,305,230],[752,217,861,239],[683,424,814,322],[713,424,850,320],
  [630,623,905,420],[630,465,690,420],[634,487,720,420],[673,508,790,423],[737,477,813,420],[742,477,815,422],[773,502,887,420],[842,468,898,422],
  [867,424,1010,313],[887,424,1047,311],
  [745,362,987,343],[763,367,841,347],[747,378,1013,349],[868,358,947,338],[868,359,947,339],[863,351,1037,331],[934,353,983,342],[950,351,1037,331],
  [780,424,888,343],[780,424,942,404],
  [530,445,840,420],[537,487,860,453],[600,488,635,462],[682,482,757,463],[783,473,860,453],
];
const L: React.FC<{ d: number[]; c: string }> = ({ d, c }) => <line x1={d[0]} y1={d[1]} x2={d[2]} y2={d[3]} stroke={c} strokeWidth={1} />;
const Poly: React.FC<{ p: string; c: string }> = ({ p, c }) => <polygon points={p} fill={c} />;
const PUR = '#4a0094', PUR2 = '#5900b0', LG = '#00e600', MG = '#009600', BG = '#00b000', YL = '#999900';

const Scene = () => (
  <svg width={930} height={507} viewBox="170 168 930 507" shapeRendering="crispEdges" fontFamily="DejaVu Sans" style={{ display: 'block' }}>
    {RED.map((d, i) => <L key={'r' + i} d={d} c="#ff0000" />)}
    {GREEN.map((d, i) => <L key={'g' + i} d={d} c="#008000" />)}
    <circle cx={183} cy={265} r={12.5} fill="none" stroke="#0a800a" />
    <circle cx={183} cy={297} r={12.5} fill="none" stroke="#0a800a" />
    <circle cx={183} cy={372} r={12.5} fill="none" stroke="#0a800a" />
    <circle cx={821} cy={478} r={12} fill="none" stroke="#0a800a" />
    <circle cx={654} cy={662} r={12} fill="none" stroke="#0a800a" />
    <g fill="#d8d8d8" fontSize={13} textAnchor="middle" style={{ shapeRendering: 'auto' }}>
      <text x={183} y={270}>2</text><text x={183} y={302}>C</text>
      <text x={821} y={483}>A1</text><text x={654} y={667}>A1</text>
      <text transform="translate(860 352) rotate(-90)">800</text>
      <text transform="translate(998 340) rotate(-90)" fontSize={12}>80</text>
      <text transform="translate(728 403) rotate(-90)">34</text>
    </g>
    <Poly p="233,168 287,168 297,228 244,232" c={PUR} /><Poly p="287,168 309,168 317,212 297,228" c={PUR2} />
    <Poly p="355,168 410,168 415,199 361,204" c={PUR} /><Poly p="410,168 431,168 434,184 415,199" c={PUR2} />
    <Poly p="987,168 1041,168 1064,309 1011,313" c={PUR} /><Poly p="1041,168 1062,168 1083,293 1064,309" c={PUR2} />
    <Poly p="170,475 210,444 481,422 523,675 170,675" c={YL} />
    <Poly p="170,378 470,352 481,422 210,444 235,425 287,385 285,368 170,378" c={MG} />
    <Poly p="170,378 285,368 170,455" c="#b2b2b2" /><Poly p="285,368 287,385 170,475 170,455" c="#8e8e8e" />
    <Poly p="170,372 472,346 470,352 170,378" c={LG} />
    <Poly p="308,472 355,468 170,612 170,580" c={LG} />
    <Poly p="355,468 369,544 200,675 170,675 170,612" c={BG} />
    <Poly p="470,353 504,356 555,675 523,675" c={PUR} />
    <Poly p="504,356 513,347 569,675 555,675" c={PUR2} />
    <Poly p="470,353 480,345 513,342 513,347 504,356" c="#6a00d8" />
    <Poly p="504,355 729,337 738,399 517,423" c={MG} />
    <Poly p="729,337 738,330 748,392 738,399" c={BG} />
    <Poly p="504,349 738,330 729,337 504,355" c={LG} />
    <path d="M225 623L218 585" stroke="#0080ff" strokeWidth={3} />
    <path d="M217 578l-4 10h8z" fill="#0080ff" />
    <path d="M210 575h8l-8 9h8" fill="none" stroke="#0080ff" />
    <path d="M225 625l-43 3" stroke="#00ff00" strokeWidth={3} />
    <path d="M179 628l12-4v6z" fill="#00ff00" />
    <path d="M187 621l4 4 4-4M191 625v6" fill="none" stroke="#00c800" />
    <path d="M226 623l11-8" stroke="#ff0000" strokeWidth={4} />
    <path d="M221 612l6 6M227 612l-6 6M237 612l5-1-1 3" fill="none" stroke="#ff0000" />
  </svg>
);

export default function App() {
  return (
    <Page>
      <Global />
      <TitleBar>
        <AppLogo s={17} />
        <TitleText>
          <TitleSpan $ls={0.3}>广联达BIM钢筋算量软件 GGJ2013 - </TitleSpan>
          <TitleSpan $ls={0.65}>[C:\Users\Administrator.PC-20141127NRHM\Desktop\</TitleSpan>
          白龙村-2018-02-02-19-24-35(2666版).GGJ12]
        </TitleText>
        <WinBtns>
          <WinBtn><svg width="11" height="11"><path d="M0 5.5h11" stroke="#222" /></svg></WinBtn>
          <WinBtn><svg width="11" height="11"><path d="M.5 2.5h8v8h-8zM2.5 2V.5h8v8H9" fill="none" stroke="#222" /></svg></WinBtn>
          <WinBtn><svg width="12" height="12"><path d="M1 1l10 10M11 1L1 11" stroke="#222" /></svg></WinBtn>
        </WinBtns>
      </TitleBar>
      <Badge>70</Badge>
      <Sogou>
        <svg width="16" height="16" viewBox="0 0 16 16"><path d="M1 15L7 1h2l6 14M4 10h8" fill="none" stroke="#1e73c4" strokeWidth="2" /></svg>
        <svg width="10" height="16" viewBox="0 0 10 16"><circle cx="2" cy="6" r="1.5" fill="#1e73c4" /><path d="M8 6q1 3-2 4" fill="none" stroke="#1e73c4" strokeWidth="1.4" /></svg>
        <svg width="16" height="16" viewBox="0 0 16 16"><circle cx="8" cy="8" r="7" fill="none" stroke="#1e73c4" strokeWidth="1.4" /><circle cx="5.5" cy="6" r="1" fill="#1e73c4" /><circle cx="10.5" cy="6" r="1" fill="#1e73c4" /><path d="M4.5 10q3.5 3 7 0" fill="none" stroke="#1e73c4" /></svg>
        <svg width="14" height="16" viewBox="0 0 14 16"><rect x="4" y="0" width="6" height="10" rx="3" fill="#1e73c4" /><path d="M1.5 6a5.5 5.5 0 0 0 11 0M7 12v3M4 15.5h6" fill="none" stroke="#1e73c4" /></svg>
        <svg width="16" height="14" viewBox="0 0 16 14"><rect width="16" height="13" rx="1.5" fill="#1e73c4" /><path d="M2 4h12M2 7h12M4 10h8" stroke="#fff" strokeDasharray="1.5 1" /></svg>
        <svg width="16" height="16" viewBox="0 0 16 16"><circle cx="6" cy="4" r="3" fill="#b7bfc8" /><path d="M1 12c0-3 2-4 5-4s4 1 4 2v3H1z" fill="#b7bfc8" /><rect x="8" y="10" width="8" height="6" fill="#fff" stroke="#9aa4ae" /></svg>
        <svg width="15" height="15" viewBox="0 0 15 15"><path d="M4 0L0 3l2 3 1-1v9h9V5l1 1 2-3-4-3-2 1H6z" fill="#1e73c4" /></svg>
        <svg width="15" height="15" viewBox="0 0 15 15"><path d="M1 12l6-6c-1-3 2-6 6-5l-3 3 1 2 2 1 2-3c1 4-2 7-5 6l-6 6z" fill="#1e73c4" /></svg>
      </Sogou>
      <SogouLogo><SLogo s={25} /></SogouLogo>

      <MenuBar>
        {MENU.map(([m, ml]) => <MenuItem key={m} $ml={ml}>{m}</MenuItem>)}
        <MenuItem $ml={-3}>
          <svg width="16" height="18" viewBox="0 0 16 18"><path d="M1 1h9l4 4v12H1z" fill="#fff" stroke="#3a86cf" /><path d="M7 10h8v3h-8zM9.500 8h3v8h-3z" fill="#4aa63a" /></svg>
          <MenuText $ml={0}>新建变更</MenuText><Caret $ml={3} />
        </MenuItem>
        <MenuItem $ml={-2}>
          <svg width="17" height="16" viewBox="0 0 17 16"><ellipse cx="8.500" cy="8" rx="7.500" ry="7" fill="#29a1e8" /><circle cx="5.500" cy="7" r="1.300" fill="#fff" /><circle cx="11.500" cy="7" r="1.300" fill="#fff" /><path d="M5 10q3.500 3 7 0" fill="none" stroke="#fff" /></svg>
          <MenuText>广小二</MenuText>
        </MenuItem>
        <HintTab>为什么筏板XY方向布置..</HintTab>
        <MenuItem>
          <svg width="16" height="16" viewBox="0 0 16 16"><rect width="16" height="16" rx="2" fill="#2f86d6" /><circle cx="8" cy="6" r="2.500" fill="#fff" /><path d="M3 13c0-3 2-4 5-4s5 1 5 4z" fill="#fff" /></svg>
          <MenuText>13907298339</MenuText><Caret $ml={5} />
        </MenuItem>
        <MenuItem>造价豆:0</MenuItem>
        <MenuItem $ml={1}><Bell size={14} fill="#2f86d6" color="#2f86d6" /></MenuItem>
        <CornerMore>»</CornerMore>
      </MenuBar>

      <Row $h={30}>
        <Toolbar $w={149} $ml={2} $gap={5}>
          <Ico n="new" />
          <Tool><Ico n="open" w={18} /><Caret $ml={1} /></Tool>
          <Ico n="save" />
          <Sep $ml={1} $mr={2} />
          <Tool><Ico n="undo" /><Caret $ml={2} /></Tool>
          <More>»</More>
        </Toolbar>
        <Toolbar $w={548} $pl={4}>
          <Tt n="define" t="定义" />
          <Tt n="sigma" t="汇总计算" />
          <Tt n="cloud" t="云检查" />
          <Tt n="flat" t="平齐板顶" />
          <Tt n="binoc" t="查找图元" />
          <Tt n="glasses" t="查看钢筋量" />
          <Tt n="batch" t="批量选择" />
          <More>»</More>
        </Toolbar>
        <Toolbar $w={663} $pl={2}>
          <ViewCombo $w={61}><Ico n="cube" w={17} />三维<Caret $ml={5} /></ViewCombo>
          <Tt n="top" t="俯视" ml={-2} caret={3} />
          <Tt n="orbit" t="动态观察" ml={-1} />
          <Tt n="local" t="局部三维" off />
          <Sep $ml={1} $mr={-3} />
          <Tt n="full" t="全屏" />
          <Tt n="zoom" t="缩放" caret={2} />
          <Tt n="pan" t="平移" caret={2} />
          <Tt n="rot" t="屏幕旋转" caret={-2} />
          <Sep />
          <Tt n="floors" t="选择楼层" />
          <More>»</More>
        </Toolbar>
      </Row>

      <Work>
        <Left>
          <NavHead>模块导航栏<HeadIcons><PinIco /><CloseIco /></HeadIcons></NavHead>
          <NavBtn>工程设置</NavBtn>
          <NavBtn>绘图输入</NavBtn>
          <TreeTools>
            <svg width="17" height="15" viewBox="0 0 17 15"><path d="M0 5h9M4.500 1v8M7 10h10M12 5.500v9" stroke="#087d7d" strokeWidth="2" /></svg>
            <svg width="17" height="15" viewBox="0 0 17 15"><path d="M0 5h9M7 10h10" stroke="#087d7d" strokeWidth="2" /></svg>
          </TreeTools>
          <TreeBox>
            <TreeMain>
              <TreeList>
                {TREE.map((n, i) => n.f ? (
                  <TreeRow key={i}>
                    <TreeChevron>{n.f === 'o' ? <ChevronDown size={12} strokeWidth={2.5} color="#444" /> : <ChevronRight size={12} strokeWidth={2.5} color="#aaa" />}</TreeChevron>
                    <FolderGap />
                    <Ico n={n.f === 'o' ? 'folderO' : 'folderC'} />
                    <TreeLabel $ml={5}>{n.t}</TreeLabel>
                  </TreeRow>
                ) : (
                  <TreeRow key={i} $child $half={n.last}>
                    <TreeItem $sel={n.sel}>
                      <Ico n={n.i!} />
                      <TreeLabel>{n.t}<Suffix>{n.s}</Suffix></TreeLabel>
                    </TreeItem>
                  </TreeRow>
                ))}
              </TreeList>
              <VScroll>
                <ChevronUp size={13} strokeWidth={2.5} color="#555" style={{ marginTop: 3 }} />
                <ScrollThumb $h={349} $mt={2} />
                <ChevronDown size={13} strokeWidth={2.5} color="#555" style={{ marginTop: 84 }} />
              </VScroll>
            </TreeMain>
            <HScroll>
              <ChevronLeft size={13} strokeWidth={2.5} color="#555" />
              <HThumb />
              <ChevronRight size={13} strokeWidth={2.5} color="#555" />
            </HScroll>
          </TreeBox>
          <NavBtn>单构件输入</NavBtn>
          <NavBtn>报表预览</NavBtn>
        </Left>

        <Center>
          <Row $h={25}>
            <Toolbar $w={791} $ml={1}>
              <Grip />
              <Tt n="del" t="删除" />
              <Sep />
              <Tt n="copy" t="复制" />
              <Tt n="mirror" t="镜像" />
              <Sep />
              <Tt n="move" t="移动" />
              <Tt n="rotate" t="旋转" />
              <Sep />
              <Tt n="extend" t="延伸" />
              <Tt n="trim" t="修剪" />
              <Sep />
              <Tt n="brk" t="打断" />
              <Tt n="merge" t="合并" />
              <Tt n="split" t="分割" off />
              <Sep />
              <Tt n="align" t="对齐" caret={-2} />
              <Tt n="offset" t="偏移" />
              <Tt n="stretch" t="拉伸" />
              <Sep />
              <Tt n="grip" t="设置夹点" off />
            </Toolbar>
          </Row>
          <Row $h={26} $mt={2}>
            <Toolbar $w={638} $ml={1} $pb={3}>
              <Grip />
              <ComboGroup>
                <Combo $w={60}>第7层<Caret /></Combo>
                {['梁', '梁', 'XL-7', '分层1'].map((t, i) => <Combo key={i}>{t}<Caret /></Combo>)}
              </ComboGroup>
              <Sep $ml={1} $mr={-1} />
              <At n="prop" t="属性" />
              <Tt n="edit" t="编辑钢筋" />
              <Tt n="list" t="构件列表" />
              <Tt n="pick" t="拾取构件" />
            </Toolbar>
            <Toolbar $w={285} $pb={3}>
              <Grip />
              <Tt n="two" t="两点" />
              <Tt n="para" t="平行" />
              <Tt n="angle" t="点角" caret={2} />
              <At n="arcaxis" t="三点辅轴" hi mr={0} />
              <SplitBtn><Caret /></SplitBtn>
              <More>»</More>
            </Toolbar>
          </Row>
          <Row $h={27} $mt={2}>
            <Toolbar $w={904} $ml={1} $pb={2}>
              <Grip />
              <At n="select" t="选择" />
              <Caret $ml={-1} />
              <Sep $ml={-1} />
              <Tt n="line" t="直线" />
              <Tt n="ptlen" t="点加长度" />
              <Tt n="arc" t="三点画弧" caret={2} />
              <Combo $w={56} $ml={-2}><span /><Caret /></Combo>
              <Tt n="rect" t="矩形" ml={-3} />
              <Sep />
              <Tt n="smart" t="智能布置" caret={-2} />
              <Sep />
              <Tt n="seg" t="修改梁段属性" />
              <Tt n="inplace" t="原位标注" caret={2} />
              <Tt n="support" t="设置支座" caret={2} />
              <Tt n="brush" t="梁跨数据复制" caret={2} />
              <More>»</More>
            </Toolbar>
            <Toolbar $w={19} $bg="#fafafa"><Grip /></Toolbar>
          </Row>
          <Canvas><Scene /></Canvas>
          <Row $h={27} $mt={3}>
            <Toolbar $w={209} $ml={1} $pb={3}>
              <Grip />
              <Tt n="ortho" t="正交" />
              <At n="snap" t="对象捕捉" />
              <Tt n="dyn" t="动态输入" />
            </Toolbar>
            <Toolbar $w={262} $ml={1} $pb={3}>
              <Grip />
              <Tt n="cross" t="交点" />
              <At n="perp" t="垂点" />
              <At n="mid" t="中点" ml={-4} />
              <Tt n="vertex" t="顶点" />
              <Tt n="coord" t="坐标" />
            </Toolbar>
            <Toolbar $w={410} $gap={3} $pl={7} $pb={3}>
              <Combo $w={57}>不偏移<Caret /></Combo>
              <Sep $ml={2} $mr={0} />
              <Plain>X=</Plain>
              <Spin $w={58}>0<SpinArrows><i /><i /></SpinArrows></Spin>
              <Plain>mm</Plain>
              <Plain $ml={2}>Y=</Plain>
              <Spin $w={58}>0<SpinArrows><i /><i /></SpinArrows></Spin>
              <Plain>mm</Plain>
              <Sep $ml={2} $mr={0} />
              <CheckBox />
              <Plain $c="#222" $ml={5}>旋转</Plain>
              <Spin $w={67} $ml={2}>0.000<SpinArrows><i /><i /></SpinArrows></Spin>
              <Plain>°</Plain>
            </Toolbar>
          </Row>
        </Center>

        <Right>
          <PropHead>属性编辑器<HeadIcons><PinIco /><CloseIco /></HeadIcons></PropHead>
          <PropBody>
            <PropGrid>
              <HCell /><HCell>属性名称</HCell><HCell $hot>属性值</HCell><HCell>附加</HCell>
              <Num $hot>1</Num><Name $sel>名称</Name><Val $mono $sel>XL-7</Val><Add />
              {PROPS.map(p => (
                <React.Fragment key={p.n}>
                  <Num>{p.n}</Num>
                  <Name $c={p.c}>{p.exp && <Expander>+</Expander>}{p.t}{p.s && <Suffix>{p.s}</Suffix>}</Name>
                  <Val $mono={p.mono}>{p.v}</Val>
                  <Add>{p.chk && <CheckBox $c="#555" />}</Add>
                </React.Fragment>
              ))}
            </PropGrid>
          </PropBody>
        </Right>
      </Work>

      <Status>
        <StatusCell $w={147}>X=-14478 Y=-12038</StatusCell>
        <StatusCell $w={79}><Cjk>层高</Cjk>:2.8m</StatusCell>
        <StatusCell $w={98}><Cjk>底标高</Cjk>:20.35m</StatusCell>
        <StatusCell $w={48}>0</StatusCell>
        <StatusCell $w={912} $ml={1}><Cjk>按鼠标左键指定第一个角点，或拾取构件图元</Cjk></StatusCell>
        <StatusCell $w={69}>215.7 FPS</StatusCell>
      </Status>

      <Taskbar>
        <StartCell><Ico n="winT" /></StartCell>
        <Search>
          <Cortana />
          在这里输入你要搜索的内容
          <MicWrap><Mic size={17} /></MicWrap>
        </Search>
        <TaskCell><Ico n="task" w={20} h={20} /></TaskCell>
        <TaskCell $w={51}><Ico n="fan" w={22} h={22} /></TaskCell>
        <TaskCell $w={52}><Ico n="ie" w={22} h={22} /></TaskCell>
        <TaskCell $w={51}><Ico n="swirl" w={26} h={26} /></TaskCell>
        <TaskSep $ml={7} $mr={14} />
        <TaskCell $w={50}><Ico n="edge" w={21} h={21} /></TaskCell>
        <TaskCell $w={48}><Ico n="ieC" w={24} h={24} /></TaskCell>
        <TaskCell $w={49}><Ico n="folderT" w={22} h={22} /></TaskCell>
        <TaskCell $w={48} $line><Ico n="geh" w={24} h={24} /></TaskCell>
        <TaskCell $on $w={48}><AppLogo s={24} /></TaskCell>
        <TaskSep $ml={26} />
        <TrayCell $w={49}>链接</TrayCell>
        <TrayCell $w={64}><span>42%</span><span>CPU使用</span></TrayCell>
        <TrayCell $w={36}><ChevronUp size={18} strokeWidth={1.3} /></TrayCell>
        <TrayCell $w={26} $ml={16}><Bell size={15} fill="#eee" /></TrayCell>
        <TrayCell $w={24}><svg width="16" height="12" viewBox="0 0 16 12"><rect x="5" y="1" width="10" height="10" fill="none" stroke="#eee" /><rect x="7" y="3" width="6" height="6" fill="#eee" /><path d="M0 4h4M0 8h4" stroke="#eee" /></svg></TrayCell>
        <TrayCell $w={25}><Wifi size={15} strokeWidth={1.4} /></TrayCell>
        <TrayCell $w={22}><Volume2 size={16} strokeWidth={1.3} /></TrayCell>
        <TrayCell $w={32}><Keyboard size={22} strokeWidth={1} /></TrayCell>
        <TrayCell $w={24}><BigA>A</BigA></TrayCell>
        <TrayCell $w={34}><SLogo s={16} /></TrayCell>
        <TrayCell $w={75}><span>22:06</span><span>2018/7/30</span></TrayCell>
        <TrayCell $w={38}><MessageSquare size={18} strokeWidth={1.2} /></TrayCell>
      </Taskbar>
    </Page>
  );
}
